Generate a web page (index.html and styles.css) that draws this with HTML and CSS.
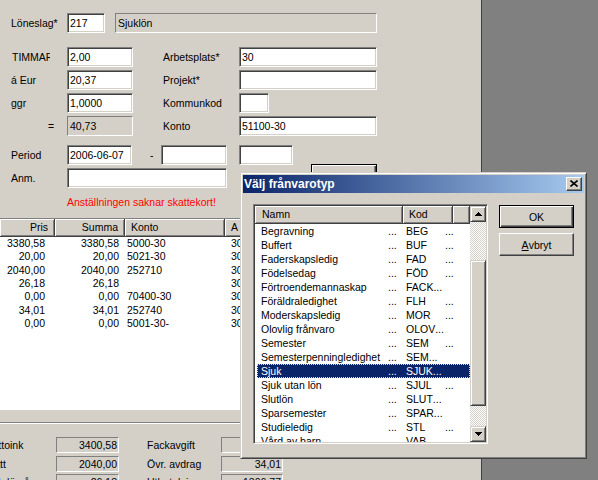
FILE: index.html
```html
<!DOCTYPE html>
<html lang="sv">
<head>
<meta charset="utf-8">
<title>Frånvaro</title>
<link rel="stylesheet" href="styles.css">
</head>
<body>
<div class="main">
  <div class="top">
    <div class="row">
      <span class="lbl">Löneslag*</span>
      <span class="inp w38">217</span>
      <span class="ro w262 ml10">Sjuklön</span>
    </div>
    <div class="row mt14">
      <span class="lbl clip">TIMMAR</span>
      <span class="inp w66">2,00</span>
      <span class="lbl2">Arbetsplats*</span>
      <span class="inp w138">30</span>
    </div>
    <div class="row mt3">
      <span class="lbl">á Eur</span>
      <span class="inp w66">20,37</span>
      <span class="lbl2">Projekt*</span>
      <span class="inp w138"></span>
    </div>
    <div class="row mt3">
      <span class="lbl">ggr</span>
      <span class="inp w66">1,0000</span>
      <span class="lbl2">Kommunkod</span>
      <span class="inp w30"></span>
    </div>
    <div class="row mt3">
      <span class="lbl eq">=</span>
      <span class="ro w66">40,73</span>
      <span class="lbl2">Konto</span>
      <span class="inp w138">51100-30</span>
    </div>
    <div class="row mt9">
      <span class="lbl">Period</span>
      <span class="inp w65">2006-06-07</span>
      <span class="dash">-</span>
      <span class="inp w66"></span>
      <span class="inp w54 ml12"></span>
    </div>
    <div class="row mt3">
      <span class="lbl">Anm.</span>
      <span class="inp w160"></span>
      <span class="pbtn">Lägg till</span>
    </div>
    <div class="warn">Anställningen saknar skattekort!</div>
  </div>

  <div class="tbl">
    <div class="thead">
      <div class="th c1">Pris</div>
      <div class="th c2">Summa</div>
      <div class="th c3">Konto</div>
      <div class="th c4">A</div>
      <div class="th c5"></div>
    </div>
    <div class="tr"><span class="d1">3380,58</span><span class="d2">3380,58</span><span class="d3">5000-30</span><span class="d4">30</span></div>
    <div class="tr"><span class="d1">20,00</span><span class="d2">20,00</span><span class="d3">5021-30</span><span class="d4">30</span></div>
    <div class="tr"><span class="d1">2040,00</span><span class="d2">2040,00</span><span class="d3">252710</span><span class="d4">30</span></div>
    <div class="tr"><span class="d1">26,18</span><span class="d2">26,18</span><span class="d3"></span><span class="d4">30</span></div>
    <div class="tr"><span class="d1">0,00</span><span class="d2">0,00</span><span class="d3">70400-30</span><span class="d4">30</span></div>
    <div class="tr"><span class="d1">34,01</span><span class="d2">34,01</span><span class="d3">252740</span><span class="d4">30</span></div>
    <div class="tr"><span class="d1">0,00</span><span class="d2">0,00</span><span class="d3">5001-30-</span><span class="d4">30</span></div>
  </div>

  <div class="groove"></div>

  <div class="bottom">
    <div class="brow">
      <span class="blbl">Bruttoink</span>
      <span class="bval w63">3400,58</span>
      <span class="blbl2">Fackavgift</span>
      <span class="bval w62"></span>
    </div>
    <div class="brow">
      <span class="blbl">Skatt</span>
      <span class="bval w63">2040,00</span>
      <span class="blbl2">Övr. avdrag</span>
      <span class="bval w62">34,01</span>
    </div>
    <div class="brow">
      <span class="blbl">Nettolön år</span>
      <span class="bval w63">26,18</span>
      <span class="blbl2">Utbetalning</span>
      <span class="bval w62">1306,77</span>
    </div>
  </div>
</div>

<div class="dlg">
  <div class="title">
    <span class="ttext">Välj frånvarotyp</span>
    <span class="xbtn"><svg width="8" height="7" viewBox="0 0 8 7"><path d="M0.5 0.5 L7.5 6.5 M7.5 0.5 L0.5 6.5" stroke="#000" stroke-width="1.6" fill="none"/></svg></span>
  </div>
  <div class="dbody">
    <div class="list">
      <div class="lv">
        <div class="lhead">
          <div class="lh h1">Namn</div>
          <div class="lh h2">Kod</div>
          <div class="lh h3"></div>
        </div>
        <div class="li"><span class="n">Begravning</span><span class="dots">...</span><span class="k"><span class="c pad">BEG</span>...</span></div>
        <div class="li"><span class="n">Buffert</span><span class="dots">...</span><span class="k"><span class="c pad">BUF</span>...</span></div>
        <div class="li"><span class="n">Faderskapsledig</span><span class="dots">...</span><span class="k"><span class="c pad">FAD</span>...</span></div>
        <div class="li"><span class="n">Födelsedag</span><span class="dots">...</span><span class="k"><span class="c pad">FÖD</span>...</span></div>
        <div class="li"><span class="n">Förtroendemannaskap</span><span class="dots">...</span><span class="k"><span class="c">FACK</span>...</span></div>
        <div class="li"><span class="n">Föräldraledighet</span><span class="dots">...</span><span class="k"><span class="c pad">FLH</span>...</span></div>
        <div class="li"><span class="n">Moderskapsledig</span><span class="dots">...</span><span class="k"><span class="c pad">MOR</span>...</span></div>
        <div class="li"><span class="n">Olovlig frånvaro</span><span class="dots">...</span><span class="k"><span class="c">OLOV</span>...</span></div>
        <div class="li"><span class="n">Semester</span><span class="dots">...</span><span class="k"><span class="c pad">SEM</span>...</span></div>
        <div class="li"><span class="n">Semesterpenningledighet</span><span class="dots">...</span><span class="k"><span class="c">SEM</span>...</span></div>
        <div class="li sel"><span class="n">Sjuk</span><span class="dots">...</span><span class="k"><span class="c">SJUK</span>...</span></div>
        <div class="li"><span class="n">Sjuk utan lön</span><span class="dots">...</span><span class="k"><span class="c pad">SJUL</span>...</span></div>
        <div class="li"><span class="n">Slutlön</span><span class="dots">...</span><span class="k"><span class="c">SLUT</span>...</span></div>
        <div class="li"><span class="n">Sparsemester</span><span class="dots">...</span><span class="k"><span class="c">SPAR</span>...</span></div>
        <div class="li"><span class="n">Studieledig</span><span class="dots">...</span><span class="k"><span class="c pad">STL</span>...</span></div>
        <div class="li"><span class="n">Vård av barn</span><span class="dots">...</span><span class="k"><span class="c pad">VAB</span>...</span></div>
      </div>
      <div class="sb">
        <div class="sbtn"><svg width="7" height="4" viewBox="0 0 7 4" shape-rendering="crispEdges"><path d="M3 0h1v1h1v1h1v1h1v1H0V3h1V2h1V1h1z" fill="#000"/></svg></div>
        <div class="track t1"></div>
        <div class="thumb"></div>
        <div class="track t2"></div>
        <div class="sbtn"><svg width="7" height="4" viewBox="0 0 7 4" shape-rendering="crispEdges"><path d="M0 0h7v1H6v1H5v1H4v1H3V3H2V2H1V1H0z" fill="#000"/></svg></div>
      </div>
    </div>
    <div class="btns">
      <div class="btn def">OK</div>
      <div class="btn"><u>A</u>vbryt</div>
    </div>
  </div>
</div>
</body>
</html>
```
FILE: styles.css
```css
* { box-sizing: border-box; }
html, body { margin: 0; padding: 0; }
body {
  background: #808080;
  font-family: "Liberation Sans", Arial, sans-serif;
  font-size: 10.5px;
  color: #000;
  width: 598px;
  height: 480px;
  overflow: hidden;
  position: relative;
}
.main {
  width: 482px;
  height: 480px;
  background: #d4d0c8;
  border-right: 1px solid #404040;
  overflow: hidden;
}
.top { padding: 13px 0 0 11px; }
.row { display: flex; align-items: center; height: 20px; }
.mt14 { margin-top: 14px; }
.mt3 { margin-top: 3px; }
.mt9 { margin-top: 9px; }
.ml10 { margin-left: 10px; }
.ml12 { margin-left: 12px; }
.lbl { width: 56px; flex: none; white-space: nowrap; }
.lbl.clip { width: 38px; overflow: hidden; margin-left: 1px; margin-right: 17px; }
.lbl.eq { padding-left: 37px; }
.lbl2 { width: 76px; margin-left: 30px; flex: none; white-space: nowrap; }
.dash { width: 29px; padding-left: 18px; flex: none; }
.inp {
  flex: none;
  height: 20px;
  background: #fff;
  border: 1px solid;
  border-color: #808080 #fff #fff #808080;
  box-shadow: inset 1px 1px #404040, inset -1px -1px #d4d0c8;
  padding: 0 2px;
  display: flex;
  align-items: center;
  white-space: nowrap;
  overflow: hidden;
}
.ro {
  flex: none;
  height: 20px;
  background: #d4d0c8;
  border: 1px solid;
  border-color: #808080 #fff #fff #808080;
  padding: 0 2px;
  display: flex;
  align-items: center;
  white-space: nowrap;
}
.w30 { width: 30px; }
.w38 { width: 38px; }
.w54 { width: 54px; }
.w65 { width: 65px; }
.w66 { width: 66px; }
.w138 { width: 138px; }
.w160 { width: 160px; }
.w262 { width: 262px; }
.pbtn {
  flex: none;
  align-self: flex-end;
  margin-left: 84px;
  width: 66px;
  height: 24px;
  border: 1px solid #000;
  box-shadow: inset 1px 1px #fff, inset -1px -1px #404040, inset -2px -2px #808080;
  display: flex;
  align-items: center;
  justify-content: center;
}
.warn {
  color: #ff0000;
  height: 16px;
  line-height: 16px;
  margin-top: 6px;
  padding-left: 56px;
  font-size: 10.5px;
}

/* table */
.tbl {
  margin-top: 8px;
  height: 192px;
  background: #fff;
  border-top: 1px solid #808080;
  border-bottom: 1px solid #fff;
  overflow: hidden;
}
.thead { display: flex; height: 18px; background: #d4d0c8; }
.th {
  flex: none;
  height: 18px;
  line-height: 17px;
  border-right: 1px solid #404040;
  border-bottom: 1px solid #404040;
  box-shadow: inset 1px 1px #fff, inset -1px -1px #808080;
  white-space: nowrap;
}
.th.c1 { width: 55px; text-align: right; padding-right: 6px; }
.th.c2 { width: 70px; text-align: right; padding-right: 6px; }
.th.c3 { width: 100px; padding-left: 6px; }
.th.c4 { width: 60px; padding-left: 6px; }
.th.c5 { flex: 1; border-right: 0; }
.tr { display: flex; height: 13.33px; line-height: 13.33px; white-space: nowrap; }
.tr span { flex: none; }
.d1 { width: 46px; text-align: right; padding-right: 1px; }
.d2 { width: 74px; text-align: right; padding-right: 1px; }
.d3 { width: 104px; padding-left: 7px; }
.d4 { width: 60px; padding-left: 7px; }

.groove {
  margin-top: 12px;
  height: 2px;
  border-top: 1px solid #808080;
  border-bottom: 1px solid #fff;
}
.bottom { margin-left: -18px; margin-top: 13px; }
.brow { display: flex; align-items: center; height: 16px; margin-bottom: 2.5px; white-space: nowrap; }
.blbl { width: 74px; flex: none; }
.blbl2 { width: 74px; margin-left: 28px; flex: none; }
.bval {
  flex: none;
  height: 16px;
  border: 1px solid;
  border-color: #808080 #fff #fff #808080;
  text-align: right;
  padding-right: 1px;
  line-height: 14px;
}
.w62 { width: 62px; }
.w63 { width: 63px; }

/* dialog window */
.dlg {
  position: absolute;
  left: 240px;
  top: 172px;
  width: 347px;
  height: 287px;
  background: #d4d0c8;
  border: 1px solid;
  border-color: #d4d0c8 #404040 #404040 #d4d0c8;
  box-shadow: inset 1px 1px #fff, inset -1px -1px #808080;
  padding: 2px;
}
.title {
  height: 18px;
  background: linear-gradient(to right, #0a246a, #a6caf0);
  display: flex;
  align-items: center;
  justify-content: space-between;
  padding: 0 2px 0 1px;
}
.ttext {
  color: #fff;
  font-weight: bold;
  font-size: 12px;
  white-space: nowrap;
}
.xbtn {
  width: 16px;
  height: 14px;
  background: #d4d0c8;
  border: 1px solid;
  border-color: #fff #404040 #404040 #fff;
  box-shadow: inset -1px -1px #808080;
  display: flex;
  align-items: center;
  justify-content: center;
  padding: 0 1px 1px 0;
}
.xbtn svg { display: block; }
.dbody { display: flex; padding: 11px 10px 0 10px; gap: 11px; }
.list {
  flex: none;
  width: 235px;
  height: 240px;
  border: 1px solid;
  border-color: #808080 #fff #fff #808080;
  box-shadow: inset 1px 1px #404040, inset -1px -1px #d4d0c8;
  padding: 1px;
  background: #fff;
  display: flex;
}
.lv { width: 215px; flex: none; overflow: hidden; background: #fff; }
.lhead { display: flex; height: 18px; background: #d4d0c8; }
.lh {
  flex: none;
  height: 18px;
  line-height: 17px;
  border-right: 1px solid #404040;
  border-bottom: 1px solid #404040;
  box-shadow: inset 1px 1px #fff, inset -1px -1px #808080;
  white-space: nowrap;
}
.lh.h1 { width: 148px; padding-left: 7px; }
.lh.h2 { width: 50px; padding-left: 6px; }
.lh.h3 { width: 17px; }
.li {
  display: flex;
  height: 14px;
  line-height: 14px;
  white-space: nowrap;
  margin-left: 2px;
}
.li .n { width: 130px; flex: none; padding-left: 4px; overflow: hidden; }
.li .dots { width: 16px; flex: none; padding-left: 1px; }
.li .k { flex: 1; padding-left: 3px; overflow: hidden; display: flex; }
.li .c { flex: none; }
.li .c.pad { min-width: 39px; }
.li.sel {
  background: #0a246a;
  color: #fff;
  outline: 1px dotted #e8dc9a;
  outline-offset: -1px;
}
.sb { width: 16px; flex: none; display: flex; flex-direction: column; }
.sbtn {
  width: 16px;
  height: 16px;
  flex: none;
  background: #d4d0c8;
  border: 1px solid;
  border-color: #d4d0c8 #404040 #404040 #d4d0c8;
  box-shadow: inset 1px 1px #fff, inset -1px -1px #808080;
  display: flex;
  align-items: center;
  justify-content: center;
}
.sbtn svg { display: block; }
.track {
  flex: none;
  background-image: conic-gradient(#fff 25%, #d4d0c8 0 50%, #fff 0 75%, #d4d0c8 0);
  background-size: 2px 2px;
}
.t1 { height: 38px; }
.t2 { height: 20px; }
.thumb {
  flex: none;
  height: 146px;
  background: #d4d0c8;
  border: 1px solid;
  border-color: #d4d0c8 #404040 #404040 #d4d0c8;
  box-shadow: inset 1px 1px #fff, inset -1px -1px #808080;
}
.btns { display: flex; flex-direction: column; gap: 5px; padding-top: 1px; }
.btn {
  width: 75px;
  height: 23px;
  border: 1px solid;
  border-color: #fff #404040 #404040 #fff;
  box-shadow: inset -1px -1px #808080;
  display: flex;
  align-items: center;
  justify-content: center;
  font-size: 10.5px;
}
.btn.def {
  border: 1px solid #000;
  box-shadow: inset 1px 1px #fff, inset -1px -1px #404040, inset -2px -2px #808080;
}
```
